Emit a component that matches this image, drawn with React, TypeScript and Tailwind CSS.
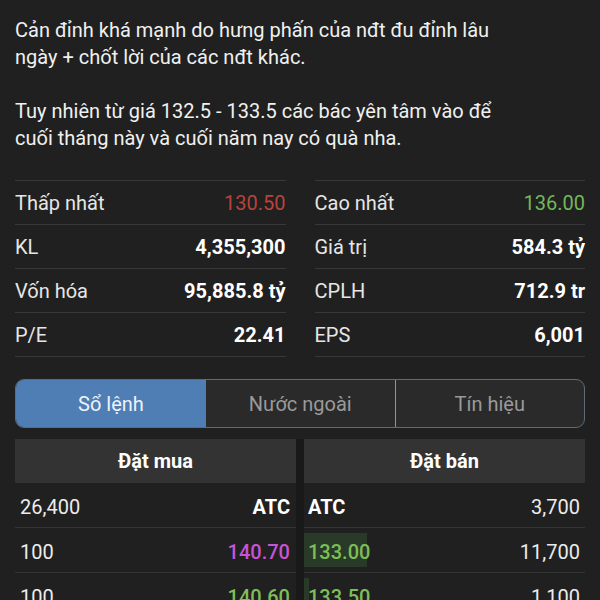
import React from "react";

type Stat = { label: string; value: string; color?: string };

const leftStats: Stat[] = [
  { label: "Thấp nhất", value: "130.50", color: "text-[#b9433c]" },
  { label: "KL", value: "4,355,300" },
  { label: "Vốn hóa", value: "95,885.8 tỷ" },
  { label: "P/E", value: "22.41" },
];

const rightStats: Stat[] = [
  { label: "Cao nhất", value: "136.00", color: "text-[#74b65a]" },
  { label: "Giá trị", value: "584.3 tỷ" },
  { label: "CPLH", value: "712.9 tr" },
  { label: "EPS", value: "6,001" },
];

const buys = [
  { qty: "26,400", price: "ATC", color: "text-white font-bold" },
  { qty: "100", price: "140.70", color: "text-[#c653d8] font-medium" },
  { qty: "100", price: "140.60", color: "text-[#7dbf56] font-medium" },
];

const sells = [
  { price: "ATC", qty: "3,700", color: "text-white font-bold", bar: 0 },
  { price: "133.00", qty: "11,700", color: "text-[#7dbf56] font-medium", bar: 63 },
  { price: "133.50", qty: "1,100", color: "text-[#7dbf56] font-medium", bar: 5 },
];

function StatColumn({ items }: { items: Stat[] }) {
  return (
    <div className="flex flex-col border-t border-[#383838]">
      {items.map((s) => (
        <div key={s.label} className="h-[44px] border-b border-[#383838] flex items-center justify-between">
          <span className="text-[#e6e6e6]">{s.label}</span>
          <span className={s.color ? s.color : "text-white font-bold"}>{s.value}</span>
        </div>
      ))}
    </div>
  );
}

export default function App() {
  return (
    <div className="w-[600px] h-[600px] overflow-hidden bg-[#202020] text-[#ececec] font-['Roboto','Noto_Sans',sans-serif]">
      <p className="pl-[15px] pr-[85px] pt-[17px] text-[20px] leading-[27px] text-[#f0f0f0]">
        Cản đỉnh khá mạnh do hưng phấn của nđt đu đỉnh lâu ngày + chốt lời của các nđt khác.
        <br />
        <br />
        Tuy nhiên từ giá 132.5 - 133.5 các bác yên tâm vào để cuối tháng này và cuối năm nay có quà nha.
      </p>

      <div className="mt-[28px] px-[15px] grid grid-cols-2 gap-x-[29px] text-[20px]">
        <StatColumn items={leftStats} />
        <StatColumn items={rightStats} />
      </div>

      <div className="mx-[15px] mt-[22px] h-[49px] flex rounded-[9px] border border-[#5e6b78] overflow-hidden text-[20px] bg-[#2a2a2a]">
        <div className="w-[190px] bg-[#4e7eb4] flex items-center justify-center text-[#eef3f8]">Sổ lệnh</div>
        <div className="flex-1 flex items-center justify-center text-[#9a9a9a] border-r border-[#8a96a2]">Nước ngoài</div>
        <div className="flex-1 flex items-center justify-center text-[#9a9a9a]">Tín hiệu</div>
      </div>

      <div className="mt-[11px] mx-[15px] flex text-[20px]">
        <div className="w-[281px] flex flex-col">
          <div className="h-[44px] bg-[#333333] flex items-center justify-center font-bold text-white">Đặt mua</div>
          {buys.map((b, i) => (
            <div key={i} className="h-[45px] border-b border-[#343434] flex items-center justify-between pl-[5px] pr-[6px] pt-[3px]">
              <span className="text-[#ececec]">{b.qty}</span>
              <span className={b.color}>{b.price}</span>
            </div>
          ))}
        </div>
        <div className="w-[8px] bg-[#191919]" />
        <div className="flex-1 flex flex-col">
          <div className="h-[44px] bg-[#333333] flex items-center justify-center font-bold text-white">Đặt bán</div>
          {sells.map((s, i) => (
            <div key={i} className="relative h-[45px] border-b border-[#343434] flex items-center justify-between pl-[4px] pr-[5px] pt-[3px]">
              {s.bar > 0 && (
                <div className="absolute left-0 top-[5px] bottom-[5px] bg-[#2a3a28]" style={{ width: s.bar }} />
              )}
              <span className={"relative " + s.color}>{s.price}</span>
              <span className="relative text-[#ececec]">{s.qty}</span>
            </div>
          ))}
        </div>
      </div>
    </div>
  );
}
